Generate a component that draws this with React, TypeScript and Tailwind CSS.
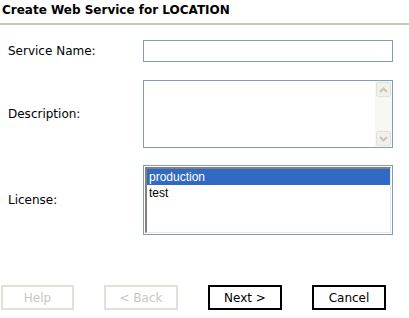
import React from 'react';

const Chevron: React.FC<{ up?: boolean }> = ({ up }) => (
  <svg width="9" height="6" viewBox="0 0 9 6" className="block">
    <path
      d={up ? 'M1 5 L4.5 1.5 L8 5' : 'M1 1 L4.5 4.5 L8 1'}
      fill="none"
      stroke="#c8c6bc"
      strokeWidth="2"
    />
  </svg>
);

const ScrollButton: React.FC<{ up?: boolean }> = ({ up }) => (
  <div className="w-[15px] h-[15px] flex items-center justify-center rounded-[2px] border border-[#e4e2d8] bg-[#f1f0ea]">
    <Chevron up={up} />
  </div>
);

const App: React.FC = () => {
  const label = 'text-[12px] text-black pl-[8px]';
  return (
    <div className="w-[409px] h-[318px] bg-white font-['DejaVu_Sans',sans-serif] flex flex-col">
      {/* Title */}
      <div className="px-[2px] pt-[3px] pb-[5px] text-[12px] font-bold leading-[15px] text-black border-b-2 border-[#c9c9b8]">
        Create Web Service for LOCATION
      </div>

      {/* Form */}
      <div className="grid grid-cols-[143px_250px] items-center mt-[15px]">
        <div className={label}>Service Name:</div>
        <div className="h-[22px] border border-[#7f9db9] bg-white" />

        <div className={`${label} mt-[18px]`}>Description:</div>
        <div className="mt-[18px] h-[68px] border border-[#7f9db9] bg-white flex justify-end">
          <div className="w-[17px] flex flex-col justify-between items-center py-[1px] bg-[#f7f7f4]">
            <ScrollButton up />
            <ScrollButton />
          </div>
        </div>

        <div className={`${label} mt-[17px]`}>License:</div>
        <div className="mt-[17px] h-[70px] border border-[#7f9db9] bg-white p-px">
          <div className="h-full border-l-2 border-t-2 border-r border-b border-l-[#808080] border-t-[#808080] border-r-[#ece9d8] border-b-[#ece9d8] font-['Liberation_Sans',sans-serif] text-[12px] leading-[16px]">
            <div className="bg-[#316ac5] text-white pl-[2px]">production</div>
            <div className="text-black pl-[2px]">test</div>
          </div>
        </div>
      </div>

      {/* Buttons */}
      <div className="mt-auto mb-[8px] flex gap-[30px] pl-[1px] text-[12px]">
        <div className="w-[73px] h-[25px] border-2 border-[#e2e1d9] text-[#c8c8c0] flex items-center justify-center">
          Help
        </div>
        <div className="w-[74px] h-[25px] border-2 border-[#e2e1d9] text-[#c8c8c0] flex items-center justify-center">
          &lt; Back
        </div>
        <div className="w-[74px] h-[25px] border-2 border-black text-black flex items-center justify-center">
          Next &gt;
        </div>
        <div className="w-[74px] h-[25px] border-2 border-black text-black flex items-center justify-center">
          Cancel
        </div>
      </div>
    </div>
  );
};

export default App;
